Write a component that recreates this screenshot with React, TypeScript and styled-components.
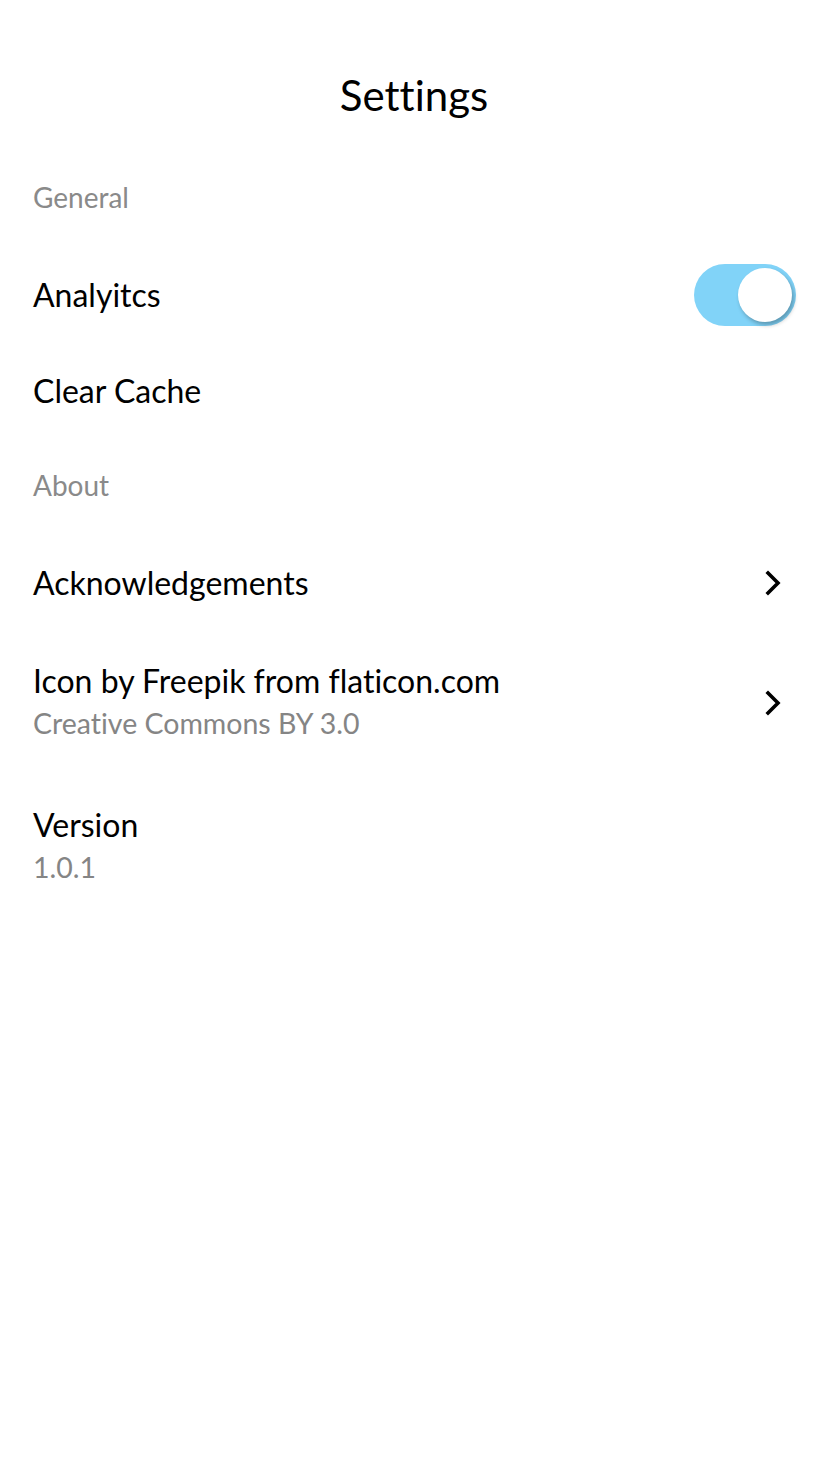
import React, { useState } from "react";
import styled, { createGlobalStyle } from "styled-components";

const GlobalStyle = createGlobalStyle`
  html, body {
    margin: 0;
    padding: 0;
    background: #ffffff;
  }
  body {
    font-family: Lato, "Noto Sans", "Open Sans", sans-serif;
    font-variant-ligatures: none;
    color: #000000;
    -webkit-font-smoothing: antialiased;
  }
`;

const Page = styled.div`
  width: 828px;
  min-height: 1472px;
  background: #ffffff;
  display: flex;
  flex-direction: column;
`;

const Header = styled.header`
  height: 151px;
  box-sizing: border-box;
  padding-top: 71px;
  display: flex;
  justify-content: center;
`;

const Title = styled.h1`
  margin: 0;
  font-size: 42px;
  line-height: 48px;
  font-weight: 400;
  color: #000000;
`;

const SectionLabel = styled.div`
  box-sizing: border-box;
  height: 96px;
  display: flex;
  align-items: center;
  padding: 0 33px 4px;
  font-size: 28px;
  color: #8a8a8a;
`;

const Row = styled.div<{ $tall?: boolean }>`
  box-sizing: border-box;
  min-height: 96px;
  padding: ${(p) => (p.$tall ? "30px 33px" : "0 33px")};
  display: flex;
  align-items: center;
  justify-content: space-between;
`;

const RowText = styled.div`
  display: flex;
  flex-direction: column;
`;

const RowTitle = styled.div`
  font-size: 32px;
  line-height: 40px;
  color: #000000;
`;

const RowSub = styled.div`
  font-size: 28.5px;
  line-height: 44px;
  color: #858585;
`;

const Track = styled.button<{ $on: boolean }>`
  position: relative;
  width: 102px;
  height: 62px;
  margin-right: -1px;
  border: none;
  padding: 0;
  border-radius: 31px;
  background: ${(p) => (p.$on ? "#81d3f8" : "#c8c8c8")};
  cursor: pointer;
`;

const Thumb = styled.span<{ $on: boolean }>`
  position: absolute;
  top: 4px;
  left: ${(p) => (p.$on ? "44px" : "4px")};
  width: 54px;
  height: 54px;
  border-radius: 50%;
  background: #ffffff;
  box-shadow: 2px 3px 4px rgba(0, 0, 0, 0.28);
`;

const Chevron = styled.svg`
  width: 20px;
  height: 26px;
  margin-right: 12px;
  flex-shrink: 0;
`;

const ChevronIcon = () => (
  <Chevron viewBox="0 0 20 26" fill="none">
    <path d="M5 3 L15 13 L5 23" stroke="#000" strokeWidth="3.6" strokeLinecap="square" strokeLinejoin="miter" />
  </Chevron>
);

export default function App() {
  const [analytics, setAnalytics] = useState(true);
  return (
    <Page>
      <GlobalStyle />
      <Header>
        <Title>Settings</Title>
      </Header>
      <SectionLabel>General</SectionLabel>
      <Row>
        <RowTitle>Analyitcs</RowTitle>
        <Track $on={analytics} onClick={() => setAnalytics(!analytics)} aria-label="Analytics">
          <Thumb $on={analytics} />
        </Track>
      </Row>
      <Row>
        <RowTitle>Clear Cache</RowTitle>
      </Row>
      <SectionLabel>About</SectionLabel>
      <Row>
        <RowTitle>Acknowledgements</RowTitle>
        <ChevronIcon />
      </Row>
      <Row $tall>
        <RowText>
          <RowTitle>Icon by Freepik from flaticon.com</RowTitle>
          <RowSub>Creative Commons BY 3.0</RowSub>
        </RowText>
        <ChevronIcon />
      </Row>
      <Row $tall>
        <RowText>
          <RowTitle>Version</RowTitle>
          <RowSub>1.0.1</RowSub>
        </RowText>
      </Row>
    </Page>
  );
}
